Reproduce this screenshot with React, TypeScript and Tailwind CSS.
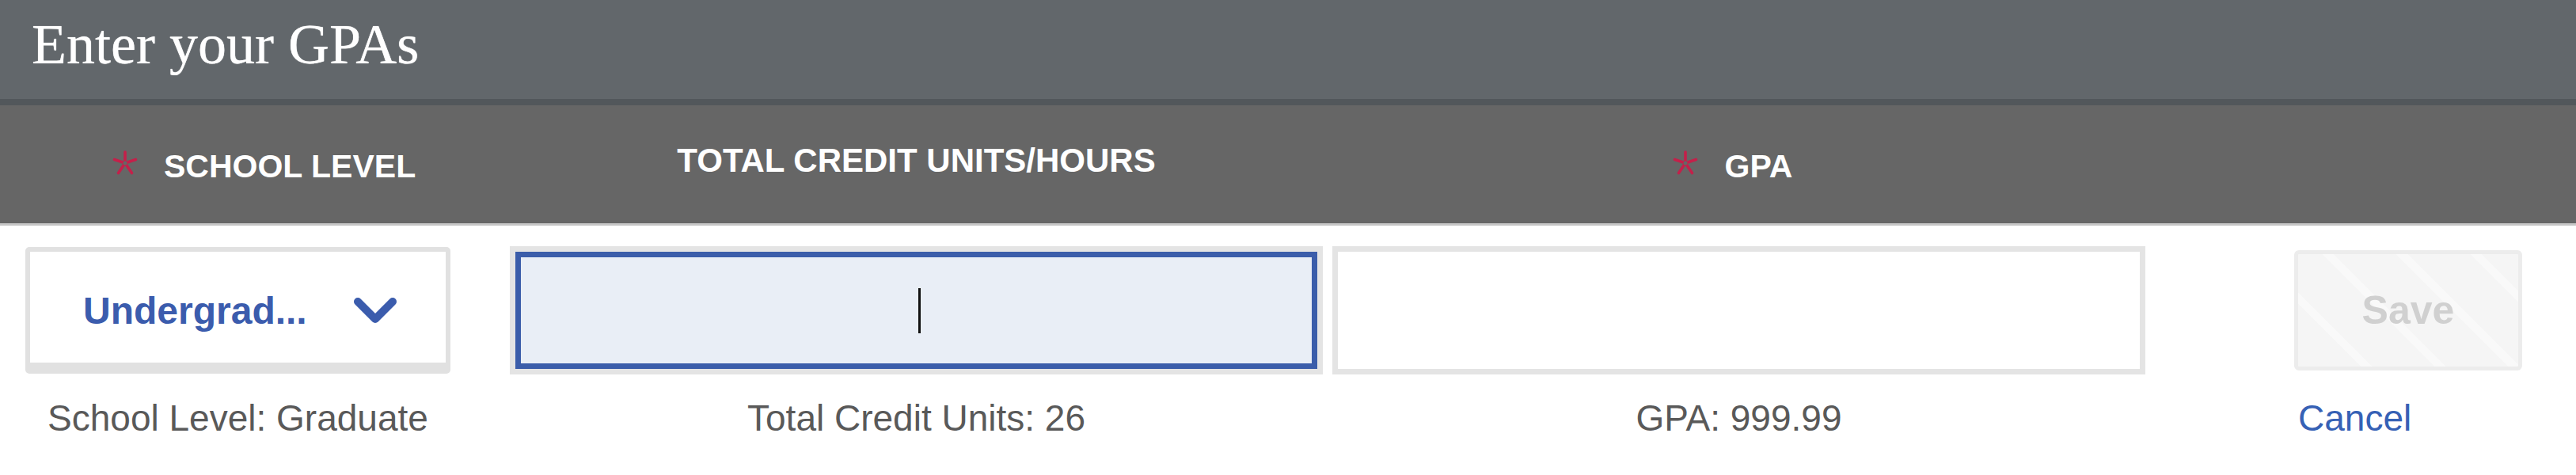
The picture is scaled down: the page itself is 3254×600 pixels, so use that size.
import React from "react";

const sans = "font-['Liberation_Sans',Arial,sans-serif]";

function Asterisk() {
  // thin five-armed red asterisk used to mark required fields
  return (
    <svg width="32" height="32" viewBox="0 0 32 32" className="shrink-0">
      <g stroke="#c4204a" strokeWidth="3.6" strokeLinecap="round">
        <line x1="16" y1="16" x2="16" y2="2" />
        <line x1="16" y1="16" x2="29.5" y2="11.5" />
        <line x1="16" y1="16" x2="24.5" y2="28.5" />
        <line x1="16" y1="16" x2="7.5" y2="28.5" />
        <line x1="16" y1="16" x2="2.5" y2="11.5" />
      </g>
      <circle cx="16" cy="16" r="2.5" fill="#666666" />
    </svg>
  );
}

function Chevron() {
  return (
    <svg width="56" height="36" viewBox="0 0 56 36" className="shrink-0">
      <path
        d="M6 6 L28 28 L50 6"
        fill="none"
        stroke="#3b5cad"
        strokeWidth="10"
        strokeLinecap="round"
        strokeLinejoin="round"
      />
    </svg>
  );
}

export default function App() {
  return (
    <div className={`w-[3254px] h-[600px] bg-white ${sans}`}>
      {/* Title bar */}
      <div className="h-[125px] bg-[#62676b] pl-[40px] pt-[20px]">
        <h1 className="font-['Liberation_Serif','Times_New_Roman',serif] text-[72px] leading-none text-white [text-shadow:0_0_1px_#ffffff]">
          Enter your GPAs
        </h1>
      </div>
      <div className="h-[8px] bg-[#52575b]" />

      {/* Column headings */}
      <div className="h-[152px] bg-[#666666] border-b-[3px] border-[#c6c6c6] flex text-white font-bold text-[41px] leading-none">
        <div className="ml-[32px] w-[537px] pl-[110px] pt-[57px] flex items-start gap-[33px]">
          <Asterisk />
          <span>SCHOOL LEVEL</span>
        </div>
        <div className="ml-[75px] w-[1027px] pt-[49px] flex justify-center">
          <span className="text-[42px]">TOTAL CREDIT UNITS/HOURS</span>
        </div>
        <div className="ml-[12px] w-[1027px] pt-[57px] pr-[16px] flex justify-center items-start gap-[34px]">
          <Asterisk />
          <span>GPA</span>
        </div>
      </div>

      {/* Inputs */}
      <div className="mt-[26px] h-[162px] flex items-center">
        <div className="ml-[32px] w-[537px] h-[160px] bg-white border-[6px] border-b-[14px] border-[#e1e1e1] rounded-[5px] flex items-center pl-[67px] pt-[9px]">
          <span className="text-[48px] leading-none font-bold text-[#3b5cad]">
            Undergrad...
          </span>
          <span className="ml-[58px] flex">
            <Chevron />
          </span>
        </div>

        <div className="ml-[75px] w-[1027px] h-[162px] bg-[#e4e4e4] p-[7px]">
          <div className="h-full border-[7px] border-[#3b5daa] bg-[#e9eef6] flex items-center justify-center">
            <div className="ml-[8px] w-[3px] h-[57px] bg-[#111111]" />
          </div>
        </div>

        <div className="ml-[12px] w-[1027px] h-[162px] bg-[#e4e4e4] p-[7px]">
          <div className="h-full bg-white" />
        </div>

        <button
          type="button"
          disabled
          className="ml-[188px] w-[288px] h-[152px] rounded-[6px] border-[5px] border-[#ececec] bg-[repeating-linear-gradient(45deg,#f5f5f5_0px,#f5f5f5_56px,#f9f9f9_56px,#f9f9f9_66px)] flex items-center justify-center text-[50px] leading-none font-bold text-[#d0d0d0]"
        >
          Save
        </button>
      </div>

      {/* Current values */}
      <div className="mt-[32px] flex text-[46px] leading-none text-[#595959]">
        <div className="ml-[32px] w-[537px] flex justify-center">
          School Level: Graduate
        </div>
        <div className="ml-[75px] w-[1027px] flex justify-center">
          Total Credit Units: 26
        </div>
        <div className="ml-[12px] w-[1027px] flex justify-center">
          GPA: 999.99
        </div>
        <div className="ml-[188px] w-[288px] pl-[5px]">
          <a href="#" className="text-[#3661b5]">
            Cancel
          </a>
        </div>
      </div>
    </div>
  );
}
